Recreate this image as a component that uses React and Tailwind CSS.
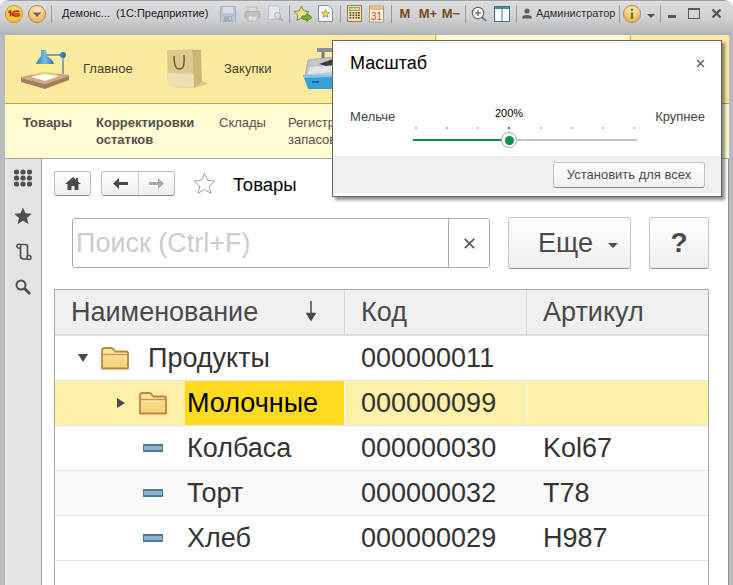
import React from "react";

const F = "font-['Liberation_Sans',Arial,sans-serif]";

function Sep({ h = "h-[18px]" }) {
  return <div className={`w-px ${h} bg-[#9a9c9f] shrink-0`} />;
}

function Cell({ w, children, className = "" }) {
  return <div className={`flex items-center justify-center shrink-0 ${className}`} style={{ width: w }}>{children}</div>;
}

function Logo1C() {
  return (
    <svg width="20" height="20" viewBox="0 0 20 20">
      <defs>
        <radialGradient id="lg1" cx="50%" cy="35%" r="65%"><stop offset="0" stopColor="#fff27a" /><stop offset="1" stopColor="#f5b81c" /></radialGradient>
      </defs>
      <circle cx="10" cy="10" r="8.6" fill="url(#lg1)" stroke="#c9973a" />
      <path d="M4.5 8.5 L6.5 7 V12.5 M15.5 8 C14 6.6 9.5 6.6 8.6 9.2 C8 11.5 10.5 12.8 15.8 11.6 M7 10h9" fill="none" stroke="#d3241c" strokeWidth="1.7" />
    </svg>
  );
}
function CircleDown() {
  return (
    <svg width="20" height="20" viewBox="0 0 20 20">
      <defs>
        <radialGradient id="cd1" cx="50%" cy="30%" r="70%"><stop offset="0" stopColor="#fff0cc" /><stop offset="1" stopColor="#eda94f" /></radialGradient>
      </defs>
      <circle cx="10" cy="10" r="8.6" fill="url(#cd1)" stroke="#b08d5e" />
      <path d="M5.5 8.5h9L10 13z" fill="#6d665c" />
    </svg>
  );
}
function SaveIc() {
  return (
    <svg className="opacity-60" width="16" height="16" viewBox="0 0 16 16">
      <rect x=".5" y=".5" width="15" height="15" fill="#a9b9c8" stroke="#8ea2b5" />
      <rect x="3" y="1" width="10" height="6" fill="#d9e1e8" />
      <rect x="4" y="10" width="8" height="5" fill="#8499ad" />
      <rect x="9.5" y="11" width="1.5" height="3" fill="#cfd8e0" />
    </svg>
  );
}
function PrintIc() {
  return (
    <svg className="opacity-60" width="17" height="16" viewBox="0 0 17 16">
      <rect x="4" y="1" width="9" height="5" fill="#dcdcdc" stroke="#a8a8a8" />
      <rect x="1" y="5.5" width="15" height="6.5" rx="1" fill="#b9b3ad" stroke="#9c9690" />
      <rect x="4" y="10" width="9" height="5" fill="#ece8e2" stroke="#b2aca5" />
      <circle cx="13.5" cy="7.5" r=".9" fill="#d98a6a" />
    </svg>
  );
}
function PreviewIc() {
  return (
    <svg className="opacity-60" width="17" height="17" viewBox="0 0 17 17">
      <path d="M1.5 .5h8l3 3v11h-11z" fill="#eef1f4" stroke="#aab6c2" />
      <circle cx="10.5" cy="10.5" r="3" fill="#dbe6ef" stroke="#8b9aa8" />
      <path d="M12.7 12.7l3 3" stroke="#a89a80" strokeWidth="2" />
    </svg>
  );
}
function StarArrow() {
  return (
    <svg width="20" height="18" viewBox="0 0 20 18">
      <path d="M8.5 1l2.3 4.9 5.2.7-3.8 3.6 1 5.3-4.7-2.6-4.7 2.6 1-5.3L1 6.6l5.2-.7z" fill="#f5e07e" stroke="#8b8458" />
      <path d="M9 11h5V8.5l5 4-5 4V14H9z" fill="#79b530" stroke="#4c7f1f" strokeWidth=".8" />
    </svg>
  );
}
function StarPage() {
  return (
    <svg width="15" height="17" viewBox="0 0 15 17">
      <path d="M.5.5h10l4 4v12H.5z" fill="#f6f8fb" stroke="#7f93a8" />
      <path d="M7.5 4.5l1.2 2.7 2.9.3-2.2 2 .6 2.9-2.5-1.5-2.5 1.5.6-2.9-2.2-2 2.9-.3z" fill="#f1cf50" stroke="#a8843a" strokeWidth=".7" />
    </svg>
  );
}
function CalcIc() {
  return (
    <svg width="15" height="17" viewBox="0 0 15 17">
      <rect x=".5" y=".5" width="14" height="16" fill="#f3e4b4" stroke="#9f7f45" />
      <rect x="2.5" y="2.5" width="10" height="3" fill="#c6dba8" stroke="#80704b" strokeWidth=".6" />
      {[7, 9.5, 12].map((y) => [2.5, 5.5, 8.5, 11].map((x) => <rect key={`${x}-${y}`} x={x} y={y} width="1.8" height="1.6" fill="#5f5130" />))}
    </svg>
  );
}
function CalIc() {
  return (
    <svg width="15" height="18" viewBox="0 0 15 18">
      <rect x=".5" y="1" width="14" height="16" fill="#fbf4e2" stroke="#ad9b74" />
      <rect x="1" y="1.5" width="13" height="3.5" fill="#e9bf7d" />
      <text x="7.5" y="15" textAnchor="middle" fontSize="10" fontFamily="Liberation Sans" fill="#d83a18">31</text>
    </svg>
  );
}
function ZoomIc() {
  return (
    <svg width="16" height="16" viewBox="0 0 16 16">
      <circle cx="7" cy="7" r="5.7" fill="#f5f6f7" stroke="#5d6063" strokeWidth="1.1" />
      <path d="M4 7h6M7 4v6" stroke="#4b4b4b" strokeWidth="1.1" />
      <path d="M11.2 11.2l3.8 3.8" stroke="#7f7468" strokeWidth="1.7" />
    </svg>
  );
}
function PanelIc() {
  return (
    <svg width="16" height="16" viewBox="0 0 16 16">
      <rect x=".5" y=".5" width="15" height="15" fill="#fff" stroke="#3f7296" />
      <rect x="1" y="1" width="14" height="2" fill="#4b86ad" />
      <path d="M8 1v14" stroke="#3f7296" />
    </svg>
  );
}
function UserIc() {
  return (
    <svg width="10" height="11" viewBox="0 0 10 11">
      <circle cx="5" cy="3" r="2.6" fill="#6b5f52" />
      <path d="M0 10.5c0-3 2.4-3.6 5-3.6s5 .6 5 3.6z" fill="#6b5f52" />
    </svg>
  );
}
function InfoIc() {
  return (
    <svg width="20" height="20" viewBox="0 0 20 20">
      <defs>
        <radialGradient id="inf" cx="50%" cy="30%" r="70%"><stop offset="0" stopColor="#fff3c4" /><stop offset="1" stopColor="#f2a640" /></radialGradient>
      </defs>
      <circle cx="10" cy="10" r="8.6" fill="url(#inf)" stroke="#b9925c" />
      <rect x="8.8" y="8.2" width="2.4" height="6.6" fill="#5d9023" />
      <circle cx="10" cy="5.8" r="1.4" fill="#5d9023" />
    </svg>
  );
}

function LampIc() {
  return (
    <svg width="50" height="42" viewBox="0 0 50 42">
      <defs>
        <linearGradient id="glow" x1="0" y1="0" x2="0" y2="1"><stop offset="0" stopColor="#fff27a" /><stop offset="1" stopColor="#fdf2a8" stopOpacity=".3" /></linearGradient>
        <linearGradient id="shade" x1="0" y1="0" x2="1" y2="0"><stop offset="0" stopColor="#2f7fb5" /><stop offset=".5" stopColor="#79bde6" /><stop offset="1" stopColor="#2b6f9f" /></linearGradient>
      </defs>
      <path d="M1 30 L25 36 L49 28 L49 32 L25 41 L1 34z" fill="#a57f5c" />
      <path d="M1 29.500 L24 24 L49 27.500 L25 36z" fill="#d3ab83" stroke="#b08a63" strokeWidth=".5" />
      <path d="M11 29 L24 26 L39 28 L25 33z" fill="#fffdf0" />
      <path d="M18 16 L31 16 L38 27 L12 28z" fill="url(#glow)" />
      <path d="M25 7 H43 V26" fill="none" stroke="#8b9aa2" strokeWidth="1.800" />
      <circle cx="43" cy="7" r="3" fill="#2f7fb5" />
      <path d="M21 2 L26 2 L27 8 C31 10 33 13 34 16 L16 16 C17 13 19 10 21 8z" fill="url(#shade)" />
    </svg>
  );
}
function BagIc() {
  return (
    <svg width="41" height="40" viewBox="0 0 41 40">
      <path d="M6 38 L28 39 L41 35 L34 31z" fill="#d9c883" opacity=".8" />
      <path d="M0 1 L25 0.500 L27 39 L1 36z" fill="#dcc98d" />
      <path d="M25 .5 L34 1 L35 33 L27 39z" fill="#cdb679" />
      <path d="M.6 24 L26.300 25 L27 39 L1 36z" fill="#ecdfb5" />
      <path d="M7 7 C7.500 16 8 20 12.500 20 C17 20 17.500 15 17 6" fill="none" stroke="#6f5d35" strokeWidth="1.500" />
    </svg>
  );
}
function RegisterIc() {
  return (
    <svg width="30" height="42" viewBox="0 0 30 42">
      <path d="M14 0 H30 V4 H14z" fill="#8a8f94" />
      <path d="M20 4 V10" stroke="#777" strokeWidth="3" />
      <path d="M5 12 L30 9 V28 H2z" fill="#c2c7cc" stroke="#8c9297" strokeWidth=".6" />
      <path d="M16 16 L30 11 V17 L23 18z" fill="#3a3d40" />
      <path d="M7 19 L30 18 V24 L5 26z" fill="#e2e5e8" />
      <path d="M0 27 H30 V41 L5 41z" fill="#38a0d8" />
      <path d="M0 27 L30 27 L30 29 L1 30z" fill="#7cc6ec" />
      <path d="M9 34 h7" stroke="#0f5f8e" strokeWidth="1.500" />
    </svg>
  );
}

function FolderIc() {
  return (
    <svg width="28" height="24" viewBox="0 0 28 24">
      <defs>
        <linearGradient id="fold" x1="0" y1="0" x2="0" y2="1"><stop offset="0" stopColor="#fce9ae" /><stop offset="1" stopColor="#f5cf73" /></linearGradient>
      </defs>
      <path d="M1 22.500V4.500C1 3 2 2 3.500 2H10c1.500 0 2.500 .8 3.500 2.500l.8 1h10.700C26.500 5.500 27 6.500 27 7.500v15z" fill="url(#fold)" stroke="#bd8738" strokeWidth="1.800" strokeLinejoin="round" />
      <path d="M1.500 8.500H26.500" stroke="#c99747" strokeWidth="1.300" />
    </svg>
  );
}
function LeafIc() {
  return (
    <svg width="20" height="8" viewBox="0 0 20 8">
      <rect width="20" height="8" fill="#4f7895" />
      <rect x="1" y="2" width="18" height="4" fill="#8cb4d1" />
    </svg>
  );
}

function Row({ name, code, art, bg = "", selected, indent, glyph, icon, iconBox }) {
  return (
    <div className={`flex h-[45px] shrink-0 border-b border-[#e4e4e4] text-[27px] text-[#333] ${selected ? "bg-[#fdf0a8]" : bg}`}>
      <div className="w-[289px] shrink-0 flex items-center" style={{ paddingLeft: indent }}>
        {glyph === "down" && <div className="w-0 h-0 mr-[13px] border-x-[5px] border-x-transparent border-t-[8px] border-t-[#4a4a4a]" />}
        {glyph === "right" && <div className="w-0 h-0 mr-[14px] border-y-[5px] border-y-transparent border-l-[8px] border-l-[#4a4a4a]" />}
        {icon}
        {selected ? (
          <div className="ml-[18px] flex-1 h-full bg-[#fedb1f] flex items-center pl-[2px] text-black">{name}</div>
        ) : (
          <div style={{ marginLeft: iconBox }}>{name}</div>
        )}
      </div>
      <div className={`w-[182px] shrink-0 flex items-center pl-[16px] border-l ${selected ? "border-white" : "border-transparent"}`}>{code}</div>
      <div className={`flex-1 flex items-center pl-[16px] border-l ${selected ? "border-white" : "border-transparent"}`}>{art}</div>
    </div>
  );
}

export default function App() {
  const ticks = [0, 1, 2, 3, 4, 5, 6, 7];
  return (
    <div className={`${F} relative w-[733px] h-[585px] overflow-hidden bg-white`}>
      <div className="h-full flex flex-col rounded-t-[9px] overflow-hidden bg-[#b9bbbe] pl-[5px] pr-[4px] border-t border-[#9fa1a4]">
        {/* title bar */}
        <div className="h-[34px] shrink-0 -ml-[5px] -mr-[4px] bg-[linear-gradient(#dcdde0_0%,#cfd1d4_50%,#b1b3b7_100%)]">
          <div className="h-[25px] flex items-center pl-[4px] text-[#3c3c3c]">
            <Cell w={20}><Logo1C /></Cell>
            <Cell w={26}><CircleDown /></Cell>
            <Cell w={3}><Sep /></Cell>
            <div className="w-[163px] pl-[9px] shrink-0 text-[11px] text-[#222] whitespace-pre">Демонс...  (1С:Предприятие)</div>
            <Cell w={24}><SaveIc /></Cell>
            <Cell w={24}><PrintIc /></Cell>
            <Cell w={22}><PreviewIc /></Cell>
            <Cell w={6}><Sep /></Cell>
            <Cell w={22}><StarArrow /></Cell>
            <Cell w={22}><StarPage /></Cell>
            <Cell w={8}><Sep /></Cell>
            <Cell w={20}><CalcIc /></Cell>
            <Cell w={24}><CalIc /></Cell>
            <Cell w={6}><Sep /></Cell>
            <Cell w={22} className="font-bold text-[13px] text-[#7a4a1c]">М</Cell>
            <Cell w={24} className="font-bold text-[13px] text-[#7a4a1c]">М+</Cell>
            <Cell w={22} className="font-bold text-[13px] text-[#7a4a1c]">М−</Cell>
            <Cell w={6}><Sep /></Cell>
            <Cell w={22}><ZoomIc /></Cell>
            <Cell w={24}><PanelIc /></Cell>
            <Cell w={4}><Sep /></Cell>
            <Cell w={18}><UserIc /></Cell>
            <div className="w-[81px] shrink-0 text-[11px] text-[#333] whitespace-nowrap">Администратор</div>
            <Cell w={4}><Sep /></Cell>
            <Cell w={22}><InfoIc /></Cell>
            <Cell w={16}><div className="w-0 h-0 mt-[5px] border-x-[4px] border-x-transparent border-t-[4px] border-t-[#555]" /></Cell>
            <Cell w={2}><Sep /></Cell>
            <Cell w={22}><div className="w-[8px] h-[3px] mt-[6px] bg-[#5a5a5a]" /></Cell>
            <Cell w={22}><div className="w-[12px] h-[11px] border border-[#5a5a5a] border-t-2" /></Cell>
            <Cell w={22}>
              <svg width="11" height="11" viewBox="0 0 11 11"><path d="M1.500 1.500l8 8M9.500 1.500l-8 8" stroke="#555" strokeWidth="2.400" /></svg>
            </Cell>
          </div>
        </div>

        {/* sections */}
        <div className="h-[69px] shrink-0 flex bg-[#fbeb9f] border-b border-[#b8a83a] text-[13px] text-[#4a4030]">
          <div className="w-[15px] shrink-0" />
          <div className="w-[63px] shrink-0 flex items-center"><LampIc /></div>
          <div className="w-[84px] shrink-0 flex items-center">Главное</div>
          <div className="w-[57px] shrink-0 flex items-center"><BagIc /></div>
          <div className="w-[79px] shrink-0 flex items-center">Закупки</div>
          <div className="w-[132px] shrink-0 flex items-center"><RegisterIc /></div>
          <div className="w-[196px] shrink-0 bg-[#fff9cf] border-x border-[#c9b23a]" />
        </div>

        {/* nav */}
        <div className="h-[55px] shrink-0 flex bg-[#fffbd3] border-b border-[#a8a8a8] pl-[18px] pt-[10px] text-[13px] leading-[17px] text-[#55504a]">
          <div className="w-[73px] shrink-0 font-bold">Товары</div>
          <div className="w-[123px] shrink-0 font-bold">Корректировки<br />остатков</div>
          <div className="w-[69px] shrink-0">Склады</div>
          <div className="shrink-0">Регистр<br />запасов</div>
        </div>

        {/* body */}
        <div className="flex-1 flex min-h-0 bg-white border-r border-[#8c8c8c]">
          <div className="w-[37px] shrink-0 bg-[#e4e4e4] border-r border-[#a8a8a8] flex flex-col items-center pt-[10px]">
            <svg width="18" height="18" viewBox="0 0 18 18">
              {[3, 9, 15].map((y) => [2.500, 9, 15.500].map((x) => <circle key={`${x}${y}`} cx={x} cy={y} r="2.600" fill="#4f4f4f" />))}
            </svg>
            <svg className="mt-[20px]" width="18" height="18" viewBox="0 0 18 18"><path d="M9 .5l2.500 5.700 6.200.6-4.700 4.100 1.400 6.100L9 13.800l-5.400 3.200L5 10.900.3 6.800l6.200-.6z" fill="#4f4f4f" /></svg>
            <svg className="mt-[18px] ml-[1px]" width="16" height="18" viewBox="0 0 16 18">
              <path d="M4.500 4.500V13c0 1.800 1 3 2.800 3h4.200V3.500C11.500 2 10.500 1.500 9 1.500H3" fill="none" stroke="#4f4f4f" strokeWidth="1.700" />
              <circle cx="2.800" cy="3.200" r="2" fill="#e4e4e4" stroke="#4f4f4f" strokeWidth="1.400" />
              <circle cx="13" cy="14.500" r="2" fill="#e4e4e4" stroke="#4f4f4f" strokeWidth="1.400" />
            </svg>
            <svg className="mt-[18px]" width="16" height="16" viewBox="0 0 16 16">
              <circle cx="6" cy="6" r="4.500" fill="none" stroke="#4f4f4f" strokeWidth="2" />
              <path d="M9.500 9.500l5.500 5.500" stroke="#4f4f4f" strokeWidth="2.600" />
            </svg>
          </div>

          <div className="flex-1 min-w-0 pl-[12px] flex flex-col">
            {/* breadcrumb */}
            <div className="h-[58px] shrink-0 flex items-start pt-[12px]">
              <button className="w-[37px] h-[25px] rounded-[3px] border border-[#bdbdbd] border-b-[#8e8e8e] bg-[linear-gradient(#ffffff,#efefef)] flex items-center justify-center">
                <svg width="16" height="13" viewBox="0 0 16 13"><path d="M8 0L0 7h2.500v6h4V9h3v4h4V7H16l-3-2.600V1h-2v1.700z" fill="#4a4a4a" /></svg>
              </button>
              <div className="ml-[10px] w-[74px] h-[25px] rounded-[3px] border border-[#bdbdbd] border-b-[#8e8e8e] bg-[linear-gradient(#ffffff,#efefef)] flex">
                <div className="w-[37px] flex items-center justify-center border-r border-[#d0d0d0]">
                  <svg width="15" height="11" viewBox="0 0 15 11"><path d="M6 0v4h9v3H6v4L0 5.500z" fill="#4a4a4a" /></svg>
                </div>
                <div className="flex-1 flex items-center justify-center">
                  <svg width="15" height="11" viewBox="0 0 15 11"><path d="M9 0v4H0v3h9v4l6-5.500z" fill="#aaa" /></svg>
                </div>
              </div>
              <svg className="ml-[18px] mt-[1px]" width="23" height="23" viewBox="0 0 23 23">
                <path d="M11.500 1.500l3 6.800 7.300.8-5.500 4.900 1.600 7.300-6.400-3.700-6.400 3.700 1.600-7.300L1.200 9.100l7.300-.8z" fill="#fff" stroke="#9a9a9a" />
              </svg>
              <div className="ml-[17px] mt-px text-[18.5px] leading-[25px] text-black">Товары</div>
            </div>

            {/* search row */}
            <div className="flex items-start pl-[18px] shrink-0">
              <div className="w-[418px] h-[50px] mt-px border border-[#aaa] rounded-[3px] flex bg-white">
                <div className="flex-1 flex items-center pl-[3px] text-[27px] text-[#cccccc]">Поиск (Ctrl+F)</div>
                <div className="w-[41px] border-l border-[#aaa] flex items-center justify-center">
                  <svg width="11" height="11" viewBox="0 0 11 11"><path d="M.8.800l9.400 9.400M10.200.800L.8 10.200" stroke="#555" strokeWidth="1.700" /></svg>
                </div>
              </div>
              <button className="ml-[18px] w-[123px] h-[52px] rounded-[3px] border border-[#c4c4c4] border-b-[#8e8e8e] bg-[linear-gradient(#ffffff,#efefef)] flex items-center pl-[29px] text-[27px] text-[#4a4a4a]">
                Еще
                <span className="ml-[15px] mt-[4px] w-0 h-0 border-x-[5px] border-x-transparent border-t-[5px] border-t-[#4a4a4a]" />
              </button>
              <button className="ml-[18px] w-[60px] h-[52px] rounded-[3px] border border-[#c4c4c4] border-b-[#8e8e8e] bg-[linear-gradient(#ffffff,#efefef)] flex items-center justify-center text-[28px] font-bold text-[#4a4a4a]">?</button>
            </div>

            {/* table */}
            <div className="mt-[20px] flex-1 min-h-0 w-[655px] border-l border-t border-r border-[#aaa] flex flex-col">
              <div className="flex h-[46px] shrink-0 bg-[#f0f0f0] border-b-2 border-[#dcdcdc] text-[27px] text-[#4a4a4a]">
                <div className="w-[290px] shrink-0 border-r border-[#d8d8d8] flex items-center pl-[16px] relative">
                  Наименование
                  <svg className="absolute left-[251px] top-[11px]" width="10" height="20" viewBox="0 0 10 20"><path d="M5 0v16M1 12.500L5 19l4-6.500z" stroke="#4a4a4a" strokeWidth="1.500" fill="#4a4a4a" /></svg>
                </div>
                <div className="w-[182px] shrink-0 border-r border-[#d8d8d8] flex items-center pl-[16px]">Код</div>
                <div className="flex-1 flex items-center pl-[16px]">Артикул</div>
              </div>
              <Row name="Продукты" code="000000011" art="" indent={23} glyph="down" icon={<FolderIc />} iconBox={19} />
              <Row name="Молочные" code="000000099" art="" indent={62} glyph="right" icon={<FolderIc />} selected />
              <Row name="Колбаса" code="000000030" art="Kol67" indent={88} icon={<LeafIc />} iconBox={24} />
              <Row name="Торт" code="000000032" art="T78" indent={88} icon={<LeafIc />} iconBox={24} bg="bg-[#f9f9f9]" />
              <Row name="Хлеб" code="000000029" art="H987" indent={88} icon={<LeafIc />} iconBox={24} />
            </div>
          </div>
        </div>
      </div>

      {/* popup */}
      <div className="absolute left-[332px] top-[40px] w-[390px] h-[157px] bg-white border border-[#666] shadow-[3px_3px_3px_rgba(0,0,0,0.45)] flex flex-col">
        <div className="h-[50px] flex items-start justify-between pl-[17px] pr-[16px] pt-[11px]">
          <span className="text-[18px] leading-[21px] mt-px text-black">Масштаб</span>
          <svg className="mt-[7px]" width="9" height="9" viewBox="0 0 9 9"><path d="M1 1l7 7M8 1L1 8" stroke="#555" strokeWidth="1.200" /></svg>
        </div>
        <div className="h-[65px] flex pl-[17px] pr-[16px] text-[13px] text-[#444]">
          <div className="w-[63px] shrink-0 pt-[17px] leading-[18px]">Мельче</div>
          <div className="w-[224px] shrink-0 flex flex-col items-stretch">
            <div className="text-[11px] leading-[13px] text-black text-center pt-[16px] -ml-[32px]">200%</div>
            <div className="flex justify-between px-[2px] mt-[7px] h-[2px]">
              {ticks.map((t) => <div key={t} className={`w-[2px] h-[2px] ${t === 3 ? "bg-[#009646]" : "bg-[#bdbdbd]"}`} />)}
            </div>
            <div className="relative mt-[10px] h-[2px] bg-[#c4c4c4]">
              <div className="h-full w-[96px] bg-[#009646]" />
              <div className="absolute left-[88px] -top-[7px] w-[16px] h-[16px] rounded-full bg-white border border-[#a8a8a8] flex items-center justify-center">
                <div className="w-[9px] h-[9px] rounded-full bg-[#009646]" />
              </div>
            </div>
          </div>
          <div className="flex-1 pt-[17px] leading-[18px] text-right whitespace-nowrap">Крупнее</div>
        </div>
        <div className="h-[37px] bg-[#f0f0f0] flex items-center justify-end pr-[16px]">
          <button className="w-[152px] h-[26px] rounded-[3px] border border-[#c4c4c4] border-b-[#8e8e8e] bg-[linear-gradient(#ffffff,#f1f1f1)] text-[13px] text-[#4a4a4a]">Установить для всех</button>
        </div>
      </div>
    </div>
  );
}
